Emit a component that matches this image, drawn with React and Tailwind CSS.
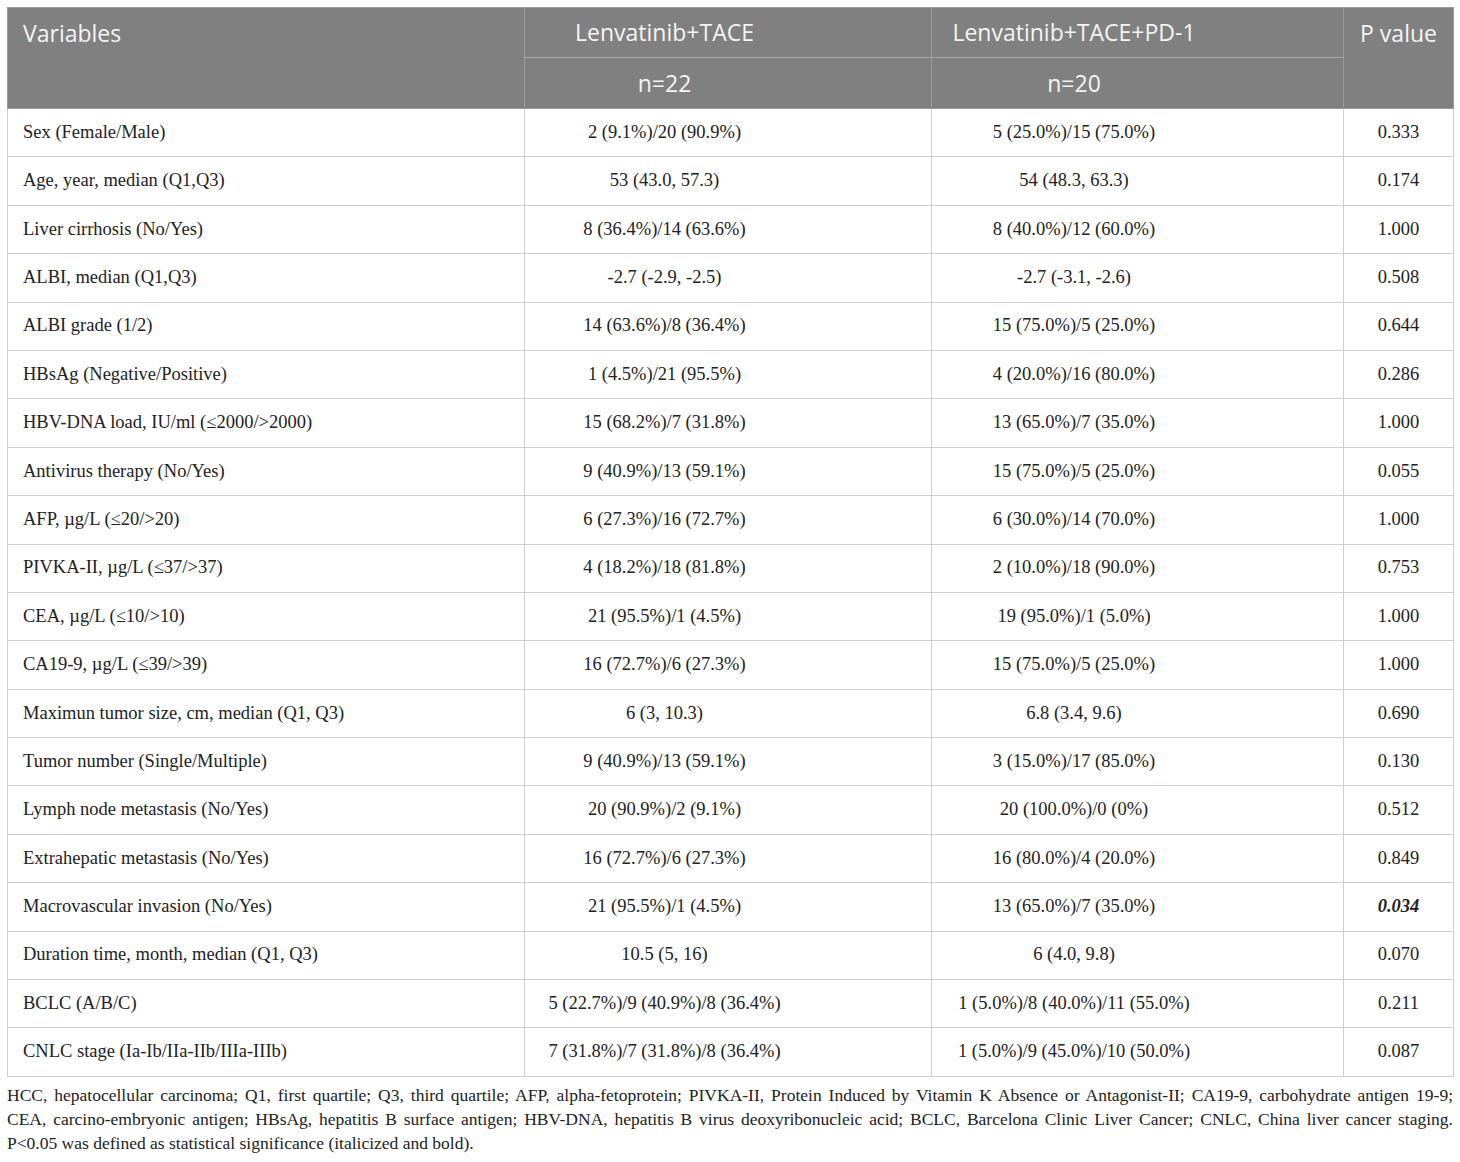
const rows = [
  ['Sex (Female/Male)', '2 (9.1%)/20 (90.9%)', '5 (25.0%)/15 (75.0%)', '0.333'],
  ['Age, year, median (Q1,Q3)', '53 (43.0, 57.3)', '54 (48.3, 63.3)', '0.174'],
  ['Liver cirrhosis (No/Yes)', '8 (36.4%)/14 (63.6%)', '8 (40.0%)/12 (60.0%)', '1.000'],
  ['ALBI, median (Q1,Q3)', '-2.7 (-2.9, -2.5)', '-2.7 (-3.1, -2.6)', '0.508'],
  ['ALBI grade (1/2)', '14 (63.6%)/8 (36.4%)', '15 (75.0%)/5 (25.0%)', '0.644'],
  ['HBsAg (Negative/Positive)', '1 (4.5%)/21 (95.5%)', '4 (20.0%)/16 (80.0%)', '0.286'],
  ['HBV-DNA load, IU/ml (≤2000/>2000)', '15 (68.2%)/7 (31.8%)', '13 (65.0%)/7 (35.0%)', '1.000'],
  ['Antivirus therapy (No/Yes)', '9 (40.9%)/13 (59.1%)', '15 (75.0%)/5 (25.0%)', '0.055'],
  ['AFP, µg/L (≤20/>20)', '6 (27.3%)/16 (72.7%)', '6 (30.0%)/14 (70.0%)', '1.000'],
  ['PIVKA-II, µg/L (≤37/>37)', '4 (18.2%)/18 (81.8%)', '2 (10.0%)/18 (90.0%)', '0.753'],
  ['CEA, µg/L (≤10/>10)', '21 (95.5%)/1 (4.5%)', '19 (95.0%)/1 (5.0%)', '1.000'],
  ['CA19-9, µg/L (≤39/>39)', '16 (72.7%)/6 (27.3%)', '15 (75.0%)/5 (25.0%)', '1.000'],
  ['Maximun tumor size, cm, median (Q1, Q3)', '6 (3, 10.3)', '6.8 (3.4, 9.6)', '0.690'],
  ['Tumor number (Single/Multiple)', '9 (40.9%)/13 (59.1%)', '3 (15.0%)/17 (85.0%)', '0.130'],
  ['Lymph node metastasis (No/Yes)', '20 (90.9%)/2 (9.1%)', '20 (100.0%)/0 (0%)', '0.512'],
  ['Extrahepatic metastasis (No/Yes)', '16 (72.7%)/6 (27.3%)', '16 (80.0%)/4 (20.0%)', '0.849'],
  ['Macrovascular invasion (No/Yes)', '21 (95.5%)/1 (4.5%)', '13 (65.0%)/7 (35.0%)', '0.034', true],
  ['Duration time, month, median (Q1, Q3)', '10.5 (5, 16)', '6 (4.0, 9.8)', '0.070'],
  ['BCLC (A/B/C)', '5 (22.7%)/9 (40.9%)/8 (36.4%)', '1 (5.0%)/8 (40.0%)/11 (55.0%)', '0.211'],
  ['CNLC stage (Ia-Ib/IIa-IIb/IIIa-IIIb)', '7 (31.8%)/7 (31.8%)/8 (36.4%)', '1 (5.0%)/9 (45.0%)/10 (50.0%)', '0.087'],
]

export default function App() {
  return (
    <div className="w-[1460px] h-[1162px] bg-white px-[7px] pt-[7px] text-[#222]">
      <table className="w-[1446px] border-collapse table-fixed font-['Liberation_Serif',serif] text-[18.5px]">
        <colgroup>
          <col className="w-[517px]" />
          <col className="w-[407px]" />
          <col className="w-[412px]" />
          <col className="w-[110px]" />
        </colgroup>
        <thead className="bg-[#808080] text-[#f4f4f4] font-['Open_Sans',sans-serif] text-[23px]">
          <tr className="h-[50px]">
            <th rowSpan={2} className="align-top text-left font-normal pl-[15px] pt-[8px] border border-[#9a9a9a]">Variables</th>
            <th className="font-normal pr-[127px] border border-[#9a9a9a] border-b-[#a8a8a8]">Lenvatinib+TACE</th>
            <th className="font-normal pr-[127px] border border-[#9a9a9a] border-b-[#a8a8a8]">Lenvatinib+TACE+PD-1</th>
            <th rowSpan={2} className="align-top font-normal pt-[8px] border border-[#9a9a9a]">P value</th>
          </tr>
          <tr className="h-[51px]">
            <th className="font-normal pr-[127px] border border-[#9a9a9a]">n=22</th>
            <th className="font-normal pr-[127px] border border-[#9a9a9a]">n=20</th>
          </tr>
        </thead>
        <tbody>
          {rows.map(r => (
            <tr key={r[0]} className="h-[48.4px]">
              <td className="border border-[#cfcfcf] pl-[15px]">{r[0]}</td>
              <td className="border border-[#cfcfcf] text-center pr-[127px]">{r[1]}</td>
              <td className="border border-[#cfcfcf] text-center pr-[127px]">{r[2]}</td>
              <td className="border border-[#cfcfcf] text-center">
                {r[4] ? <b className="italic">{r[3]}</b> : r[3]}
              </td>
            </tr>
          ))}
        </tbody>
      </table>
      <div className="mt-[6px] w-[1446px] font-['Liberation_Serif',serif] text-[17.5px] leading-[24px] text-[#222]">
        <p className="text-justify [text-align-last:justify] whitespace-nowrap">
          HCC, hepatocellular carcinoma; Q1, first quartile; Q3, third quartile; AFP, alpha-fetoprotein; PIVKA-II, Protein Induced by Vitamin K Absence or Antagonist-II; CA19-9, carbohydrate antigen 19-9;
        </p>
        <p className="text-justify [text-align-last:justify]">
          CEA, carcino-embryonic antigen; HBsAg, hepatitis B surface antigen; HBV-DNA, hepatitis B virus deoxyribonucleic acid; BCLC, Barcelona Clinic Liver Cancer; CNLC, China liver cancer staging.
        </p>
        <p>P&lt;0.05 was defined as statistical significance (italicized and bold).</p>
      </div>
    </div>
  )
}
